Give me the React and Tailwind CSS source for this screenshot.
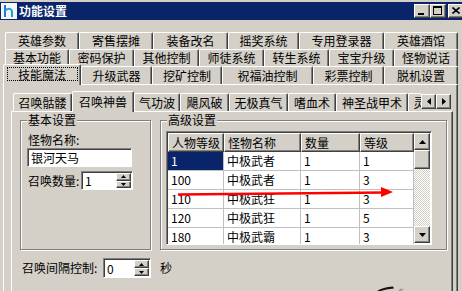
const RAISED =
  'border border-t-white border-l-white border-r-[#404040] border-b-[#404040] shadow-[inset_-1px_-1px_0_#808080]';
const SUNKEN =
  'border border-t-[#808080] border-l-[#808080] border-r-white border-b-white shadow-[inset_1px_1px_0_#404040]';
const ETCHED = 'border border-[#808080] shadow-[inset_1px_1px_0_#fff,1px_1px_0_#fff]';

const ROW1 = [
  ['英雄参数', 'w-[74px]'],
  ['寄售摆摊', 'w-[74px]'],
  ['装备改名', 'w-[75px]'],
  ['摇奖系统', 'w-[71px]'],
  ['专用登录器', 'w-[85px]'],
  ['英雄酒馆', 'w-[74px]'],
];
const ROW2 = [
  ['基本功能', 'w-[64px]'],
  ['密码保护', 'w-[65px]'],
  ['其他控制', 'w-[65px]'],
  ['师徒系统', 'w-[65px]'],
  ['转生系统', 'w-[65px]'],
  ['宝宝升级', 'w-[65px]'],
  ['怪物说话', 'w-[64px]'],
];
const ROW3 = [
  ['升级武器', 'w-[71px]'],
  ['挖矿控制', 'w-[70px]'],
  ['祝福油控制', 'w-[91px]'],
  ['彩票控制', 'w-[71px]'],
  ['脱机设置', 'w-[74px]'],
];
const SKILLS = [
  ['召唤骷髅', 'w-[59px]'],
  ['召唤神兽', 'w-[62px]', true],
  ['气功波', 'w-[46px]'],
  ['飓风破', 'w-[49px]'],
  ['无极真气', 'w-[59px]'],
  ['嗜血术', 'w-[48px]'],
  ['神圣战甲术', 'w-[72px]'],
  ['灵魂火符', 'w-[59px]'],
];

const COLS = ['w-[56px]', 'w-[77px]', 'w-[59px]', 'w-[54px]'];
const HEAD = ['人物等级', '怪物名称', '数量', '等级'];
const ROWS = [
  ['1', '中极武者', '1', '1'],
  ['100', '中极武者', '1', '3'],
  ['110', '中极武狂', '1', '3'],
  ['120', '中极武狂', '1', '5'],
  ['180', '中极武霸', '1', '3'],
];

function Tab({ label, w, sel, focus, h = 'h-[17px]' }) {
  return (
    <div
      className={`${w} ${
        sel ? 'relative z-10 h-[21px] -mb-px' : h
      } shrink-0 flex items-center justify-center bg-[#d4d0c8] border-t border-x border-t-white border-l-white border-r-[#404040] rounded-t-[2px] shadow-[inset_-1px_0_0_#808080] whitespace-nowrap`}
    >
      {label}
      {focus && (
        <span className="absolute left-[3px] right-[2px] top-[2px] bottom-[4px] border border-dotted border-black" />
      )}
    </div>
  );
}

function Tri({ down }) {
  return (
    <svg width="5" height="3" viewBox="0 0 5 3" className="block">
      <path d={down ? 'M0 0H5L2.5 3Z' : 'M0 3H5L2.5 0Z'} fill="#000" />
    </svg>
  );
}

function Spin({ w, value, h = 'h-[19px]' }) {
  return (
    <div className={`${w} ${h} ${SUNKEN} bg-white flex shrink-0`}>
      <span className="flex-1 pl-[3px] pt-px flex items-center">{value}</span>
      <div className="w-[16px] flex flex-col py-px pr-px">
        <div className={`flex-1 ${RAISED} bg-[#d4d0c8] flex items-center justify-center`}>
          <Tri />
        </div>
        <div className={`flex-1 ${RAISED} bg-[#d4d0c8] flex items-center justify-center`}>
          <Tri down />
        </div>
      </div>
    </div>
  );
}

function ArrowBtn({ dir }) {
  return (
    <div className={`w-[15px] h-[15px] ${RAISED} bg-[#d4d0c8] flex items-center justify-center`}>
      <svg width="4" height="7" viewBox="0 0 4 7">
        <path d={dir === 'l' ? 'M4 0V7L0 3.5Z' : 'M0 0V7L4 3.5Z'} fill="#000" />
      </svg>
    </div>
  );
}

function Group({ title, className, children }) {
  return (
    <div className={`relative ${ETCHED} ${className}`}>
      <span className="absolute left-[6px] -top-[7px] bg-[#d4d0c8] px-px leading-[12px]">{title}</span>
      {children}
    </div>
  );
}

export default function App() {
  return (
    <div className="relative w-[462px] h-[291px] overflow-hidden bg-[#d4d0c8] text-[12px] leading-[12px] text-black font-['Noto_Sans_CJK_SC','Noto_Sans',sans-serif]">
      {/* title bar */}
      <div className="mt-[2px] h-[18px] bg-[#0a246a] flex items-center">
        <svg width="16" height="16" viewBox="0 0 16 16" className="ml-px shrink-0">
          <rect x="0" y="0" width="16" height="16" fill="#f4f6fa" />
          <path d="M4 2V14" stroke="#2f6fd0" strokeWidth="2" />
          <path d="M4 8C6 5 11 5 11 9V14" stroke="#17a6c4" strokeWidth="2" fill="none" />
        </svg>
        <span className="ml-[2px] text-white font-bold">功能设置</span>
        <div className="ml-auto -mr-[2px] flex items-center">
          <div className={`w-[16px] h-[14px] ${RAISED} bg-[#d4d0c8] relative`}>
            <span className="absolute left-[3px] top-[8px] w-[6px] h-[2px] bg-black" />
          </div>
          <div className={`w-[16px] h-[14px] ${RAISED} bg-[#d4d0c8] relative`}>
            <span className="absolute left-[2px] top-[1px] w-[9px] h-[9px] border border-t-2 border-black" />
          </div>
          <div className={`ml-[2px] w-[16px] h-[14px] ${RAISED} bg-[#d4d0c8] relative`}>
            <svg width="8" height="7" viewBox="0 0 8 7" className="absolute left-[3px] top-[2px]">
              <path d="M0.5 0.5L7.5 6.5M7.5 0.5L0.5 6.5" stroke="#000" strokeWidth="1.6" />
            </svg>
          </div>
        </div>
      </div>

      {/* outer tab rows */}
      <div className="mt-[12px] ml-[5px] flex">
        {ROW1.map(([l, w]) => (
          <Tab key={l} label={l} w={w} />
        ))}
      </div>
      <div className="ml-[5px] flex">
        {ROW2.map(([l, w]) => (
          <Tab key={l} label={l} w={w} />
        ))}
      </div>
      <div className="ml-[3px] flex items-end h-[18px]">
        <Tab label="技能魔法" w="w-[78px]" sel focus />
        {ROW3.map(([l, w]) => (
          <Tab key={l} label={l} w={w} h="h-[18px]" />
        ))}
      </div>

      {/* outer panel */}
      <div className="ml-[3px] w-[455px] h-[220px] border-t border-x border-t-white border-l-white border-r-[#404040] shadow-[inset_-1px_0_0_#808080] pl-[7px] pt-[6px]">
        {/* inner tab header */}
        <div className="flex w-[442px]">
          <div className="w-[410px] overflow-x-clip">
            <div className="ml-[2px] flex items-end h-[20px]">
              {SKILLS.map(([l, w, s]) => (
                <Tab key={l} label={l} w={w} sel={s} h="h-[18px]" />
              ))}
            </div>
          </div>
          <div className="mt-[3px] flex">
            <ArrowBtn dir="l" />
            <ArrowBtn dir="r" />
          </div>
        </div>

        {/* inner panel */}
        <div className="w-[442px] h-[200px] border-t border-x border-t-white border-l-white border-r-[#404040] shadow-[inset_-1px_0_0_#808080]">
          <div className="mt-[8px] ml-[8px] flex gap-[9px]">
            <Group title="基本设置" className="w-[131px] h-[130px] px-[6px] pt-[13px]">
              <div className="ml-px">怪物名称:</div>
              <div className={`mt-[2px] w-[105px] h-[19px] ${SUNKEN} bg-white pl-[3px] flex items-center`}>
                银河天马
              </div>
              <div className="mt-[4px] flex items-center">
                <span className="ml-px w-[53px]">召唤数量:</span>
                <Spin w="w-[52px]" value="1" />
              </div>
            </Group>

            <Group title="高级设置" className="w-[287px] h-[130px] pl-[5px] pt-[10px]">
              <div className={`relative w-[266px] h-[114px] ${SUNKEN} bg-white flex`}>
                <div className="w-[246px] ml-px mt-px overflow-hidden">
                  <div className="flex">
                    {HEAD.map((t, i) => (
                      <div key={t} className={`${COLS[i]} h-[19px] ${RAISED} bg-[#d4d0c8] pl-[3px] flex items-center`}>
                        {t}
                      </div>
                    ))}
                  </div>
                  {ROWS.map((r, ri) => (
                    <div key={ri} className="flex">
                      {r.map((c, ci) => (
                        <div
                          key={ci}
                          className={`${COLS[ci]} h-[19px] border-r border-b border-[#c0c0c0] pl-[3px] flex items-center ${
                            ri === 0 && ci === 0 ? 'bg-[#0a246a] text-white' : ''
                          }`}
                        >
                          {c}
                        </div>
                      ))}
                    </div>
                  ))}
                </div>
                {/* scrollbar */}
                <div className="w-[16px] mt-px flex flex-col h-[110px]">
                  <div className={`h-[17px] ${RAISED} bg-[#d4d0c8] flex items-center justify-center`}>
                    <svg width="7" height="4" viewBox="0 0 7 4"><path d="M0 4H7L3.5 0Z" fill="#000" /></svg>
                  </div>
                  <div className={`h-[19px] ${RAISED} bg-[#d4d0c8]`} />
                  <div className="flex-1 bg-[repeating-conic-gradient(#d4d0c8_0%_25%,#ffffff_0%_50%)] bg-[length:2px_2px]" />
                  <div className={`h-[17px] ${RAISED} bg-[#d4d0c8] flex items-center justify-center`}>
                    <svg width="7" height="4" viewBox="0 0 7 4"><path d="M0 0H7L3.5 4Z" fill="#000" /></svg>
                  </div>
                </div>
              </div>
            </Group>
          </div>

          <div className="mt-[8px] ml-[10px] flex items-center">
            <span className="w-[81px]">召唤间隔控制:</span>
            <Spin w="w-[48px]" h="h-[20px]" value="0" />
            <span className="ml-[9px]">秒</span>
          </div>
        </div>
      </div>

      {/* red annotation arrow and stray mark */}
      <svg className="absolute left-0 top-0 pointer-events-none" width="462" height="291" viewBox="0 0 462 291">
        <path d="M178 194.5C260 193.5 330 193 384 192.5" stroke="#ff0000" strokeWidth="2.5" fill="none" />
        <path d="M381 187L393 192L381 197Z" fill="#ff0000" />
        <path d="M377 291C381 288.5 386 287 393 286.5L394 288.5C388 289 384 290 381 291Z" fill="#111" />
        <path d="M398 290.5L401 288.5L404 289.5L401 291Z" fill="#9a9a9a" />
      </svg>
    </div>
  );
}
